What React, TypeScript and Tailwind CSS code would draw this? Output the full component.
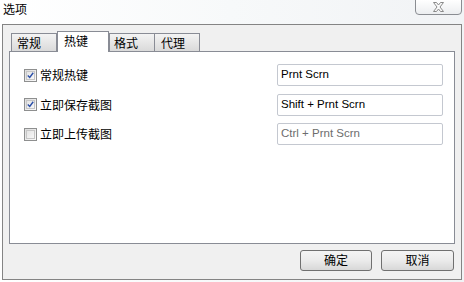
import React from 'react';

const cjk = "font-['Noto_Sans_CJK_SC',sans-serif]";

function CheckBox({ checked }: { checked: boolean }) {
  return (
    <span className="flex h-[13px] w-[13px] items-center justify-center border border-[#8e8f8f] bg-gradient-to-br from-[#dcdcdc] to-[#fbfbfb]">
      <span className="flex h-[9px] w-[9px] items-center justify-center border border-[#c6c6c6] bg-gradient-to-br from-[#e4e4e4] to-[#f7f7f7]">
        {checked && (
          <svg width="9" height="9" viewBox="0 0 9 9">
            <path d="M1 4.5 L3.5 7 L8 1" fill="none" stroke="#2a4fa8" strokeWidth="1.8" />
          </svg>
        )}
      </span>
    </span>
  );
}

const rows = [
  { label: '常规热键', checked: true, value: 'Prnt Scrn', muted: false },
  { label: '立即保存截图', checked: true, value: 'Shift + Prnt Scrn', muted: false },
  { label: '立即上传截图', checked: false, value: 'Ctrl + Prnt Scrn', muted: true },
];

export default function App() {
  return (
    <div className={`flex h-[282px] w-[464px] flex-col overflow-hidden bg-gradient-to-r from-white via-[#f7f9fa] to-[#f1f3f5] text-[12px] text-black ${cjk}`}>
      {/* title bar */}
      <div className="flex h-[24px] items-start justify-between pl-[3px]">
        <span className="pt-[1px] leading-[16px]">选项</span>
        <button className="mr-[2px] mt-[-1px] flex h-[16px] w-[47px] items-center justify-center rounded-b-[4px] border border-[#8a8d92] bg-gradient-to-b from-white to-[#eceef0]">
          <svg width="11" height="10" viewBox="0 0 11 10">
            <path
              d="M0.5 0.5 H3.5 L5.5 3 L7.5 0.5 H10.5 L7 5 L10.5 9.5 H7.5 L5.5 7 L3.5 9.5 H0.5 L4 5 Z"
              fill="#fafafa"
              stroke="#8a8a8a"
              strokeWidth="1"
            />
          </svg>
        </button>
      </div>

      {/* frame */}
      <div className="mx-[2px] flex h-[256px] flex-col border border-[#848484] bg-[#f0f0f0] px-[6px]">
        <div className="flex h-[26px] items-end pl-[2px] pt-[6px]">
          <div className="flex h-[18px] w-[46px] items-center border border-b-0 border-[#898c95] bg-gradient-to-b from-[#f3f3f3] to-[#dadada] pl-[5px] leading-[16px]">
            常规
          </div>
          <div className="relative z-10 -mb-px flex h-[21px] w-[52px] items-start border border-b-0 border-[#898c95] bg-white pl-[6px] pt-[1px] leading-[16px]">
            热键
          </div>
          <div className="flex h-[18px] w-[46px] items-center border border-b-0 border-[#898c95] bg-gradient-to-b from-[#f3f3f3] to-[#dadada] pl-[4px] leading-[16px]">
            格式
          </div>
          <div className="-ml-px flex h-[18px] w-[46px] items-center border border-b-0 border-[#898c95] bg-gradient-to-b from-[#f3f3f3] to-[#dadada] pl-[6px] leading-[16px]">
            代理
          </div>
        </div>

        {/* panel */}
        <div className="flex h-[193px] flex-col gap-[7.5px] border border-[#898c95] bg-white pl-[14px] pr-[11px] pt-[12px]">
          {rows.map((r) => (
            <div key={r.label} className="flex h-[22px] items-center justify-between">
              <label className="flex items-center gap-[3px] leading-[16px]">
                <CheckBox checked={r.checked} />
                <span>{r.label}</span>
              </label>
              <div
                className={`flex h-[22px] w-[166px] items-center rounded-[2px] border border-[#c4c8d0] bg-white pl-[3px] font-['Liberation_Sans',sans-serif] text-[11.5px] ${r.muted ? 'text-[#6d6d6d]' : 'text-black'}`}
              >
                {r.value}
              </div>
            </div>
          ))}
        </div>

        {/* buttons */}
        <div className="flex flex-1 items-center justify-end gap-[9px] pb-[3px] pr-[1px]">
          <button className="flex h-[21px] w-[72px] items-center justify-center rounded-[3px] border border-[#707070] bg-gradient-to-b from-[#f4f4f4] via-[#ebebeb] to-[#d8d8d8] leading-[16px]">
            确定
          </button>
          <button className="flex h-[21px] w-[73px] items-center justify-center rounded-[3px] border border-[#707070] bg-gradient-to-b from-[#f4f4f4] via-[#ebebeb] to-[#d8d8d8] leading-[16px]">
            取消
          </button>
        </div>
      </div>
    </div>
  );
}
